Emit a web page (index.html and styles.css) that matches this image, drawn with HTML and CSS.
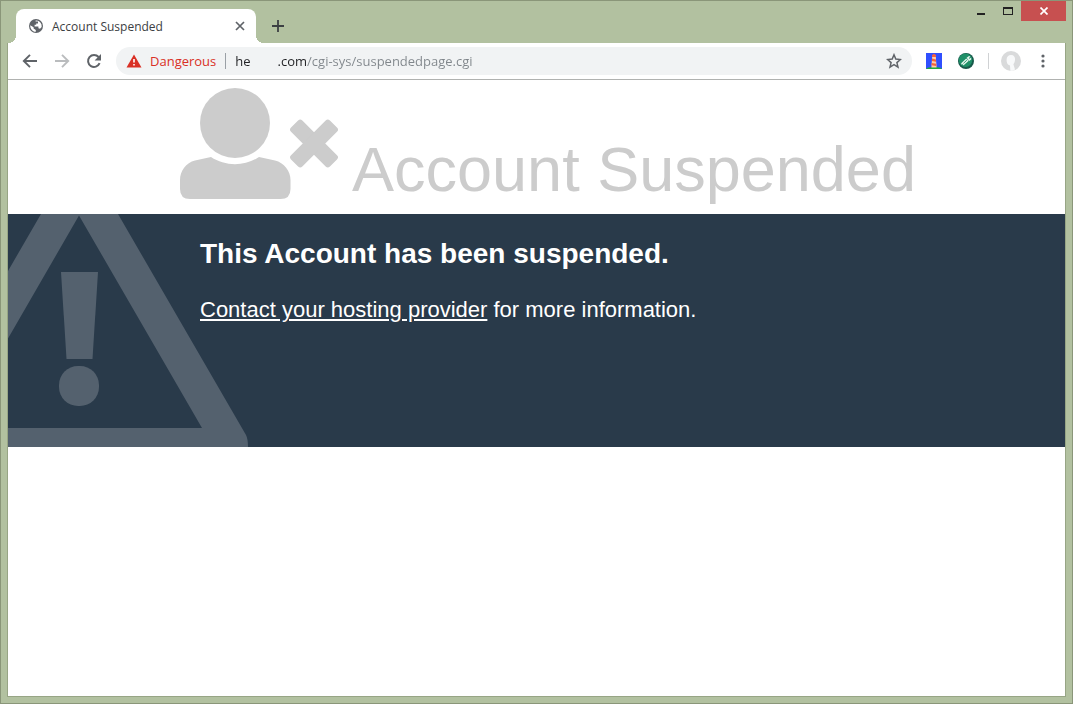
FILE: index.html
```html
<!DOCTYPE html>
<html lang="en">
<head>
  <meta charset="UTF-8">
  <title>Account Suspended</title>
  <link rel="stylesheet" href="styles.css">
</head>
<body>
  <div class="window">
    <div class="titlebar">
      <div class="tab">
        <svg class="favicon" viewBox="0 0 14 14" width="14" height="14">
          <circle cx="7" cy="7" r="7" fill="#5f6368"/>
          <path d="M1.2 6.2 L4.6 8.2 V9.6 L6.8 11 V12.8 C3.2 12.6 1.2 9.8 1.2 6.2Z M6.6 1.4 C9.2 1.2 11.4 2.6 12.5 5.4 L12.7 8 L11 9.8 L9.4 9.2 V7.4 H5.6 V5.8 H7.2 V4.4 H9 V2.6 H6.6Z" fill="#fff"/>
        </svg>
        <span class="tab-title">Account Suspended</span>
        <button class="tab-close" aria-label="Close tab">
          <svg viewBox="0 0 10 10" width="10" height="10"><path d="M1 1L9 9M9 1L1 9" stroke="#5f6368" stroke-width="1.7"/></svg>
        </button>
      </div>
      <button class="new-tab" aria-label="New tab">
        <svg viewBox="0 0 12 12" width="12" height="12"><path d="M6 0V12M0 6H12" stroke="#3c4043" stroke-width="1.8"/></svg>
      </button>
      <div class="window-controls">
        <button class="win-btn" aria-label="Minimize">
          <svg viewBox="0 0 10 10" width="10" height="10"><path d="M1 8H9" stroke="#222" stroke-width="2"/></svg>
        </button>
        <button class="win-btn" aria-label="Maximize">
          <svg viewBox="0 0 10 8" width="10" height="8"><path d="M0 0H10V8H0ZM1 2V7H9V2Z" fill="#222" fill-rule="evenodd"/></svg>
        </button>
        <button class="win-btn win-close" aria-label="Close">
          <svg viewBox="0 0 8 8" width="8" height="8"><path d="M.5 .5L7.5 7.5M7.500 .5L.5 7.500" stroke="#fff" stroke-width="1.7"/></svg>
        </button>
      </div>
    </div>

    <div class="frame">
      <div class="toolbar">
        <button class="nav-btn" aria-label="Back">
          <svg viewBox="0 0 16 16" width="16" height="16"><path d="M15 8H2M8 1.8L1.8 8L8 14.2" fill="none" stroke="#5f6368" stroke-width="1.9"/></svg>
        </button>
        <button class="nav-btn" aria-label="Forward">
          <svg viewBox="0 0 16 16" width="16" height="16"><path d="M1 8H14M8 1.8L14.2 8L8 14.2" fill="none" stroke="#babcbe" stroke-width="1.9"/></svg>
        </button>
        <button class="nav-btn" aria-label="Reload">
          <svg viewBox="0 0 16 16" width="16" height="16"><path d="M13.6 10.2A6 6 0 1 1 12.6 4" fill="none" stroke="#5f6368" stroke-width="2"/><path d="M15 1V7.4H8.6Z" fill="#5f6368"/></svg>
        </button>

        <div class="omnibox">
          <svg viewBox="0 0 16 14" width="16" height="14"><path d="M8 .5L15.5 13.5H.5Z" fill="#d93025"/><path d="M7.2 5H8.8V8.6H7.2ZM7.2 10H8.8V11.6H7.2Z" fill="#fff"/></svg>
          <span class="danger">Dangerous</span>
          <input class="url" type="text" aria-label="Address" value="he&nbsp;&nbsp;&nbsp;&nbsp;&nbsp;&nbsp;&nbsp;&nbsp;.com/cgi-sys/suspendedpage.cgi">
          <button class="star" aria-label="Bookmark this page">
            <svg viewBox="0 0 16 16" width="16" height="16"><path d="M8 1.8L9.8 6.1L14.4 6.5L10.9 9.6L12 14.1L8 11.7L4 14.1L5.1 9.6L1.6 6.5L6.2 6.1Z" fill="none" stroke="#5f6368" stroke-width="1.5"/></svg>
          </button>
        </div>

        <div class="extensions">
          <button aria-label="Lighthouse">
            <svg viewBox="0 0 16 16" width="16" height="16">
              <rect width="16" height="16" fill="#304ffe"/>
              <path d="M0 16Q1 14 8 14T16 16Z" fill="#1faa3c"/>
              <path d="M6.2 3H9.8L10.6 14.5H5.4Z" fill="#ffcfa8"/>
              <path d="M6 2L8 .8L10 2V4H6ZM6 5.6L10 6.4V8.8L5.900 8ZM5.700 10L10.200 10.800V13L5.500 12.200Z" fill="#f4623c"/>
            </svg>
          </button>
          <button aria-label="Developer extension">
            <svg viewBox="0 0 16 16" width="16" height="16">
              <circle cx="8" cy="8" r="8" fill="#17594a"/>
              <circle cx="7.5" cy="7.3" r="6.7" fill="#1f9068"/>
              <path d="M3.2 10.200L8.200 5.400L10.800 7.800L5.400 12.600L4.800 11.200L3.200 11.600Z" fill="#e4f5ec"/>
              <path d="M8.600 4.800L11 3L12.400 3.400L10.800 5.200L11.600 5.800L13.200 4.600V6.400L11.200 8Z" fill="#e4f5ec"/>
              <path d="M5.400 10.400L8.800 7.200" stroke="#1f9068" stroke-width=".9"/>
            </svg>
          </button>
        </div>
        <div class="profile">
          <button aria-label="Profile">
            <svg viewBox="0 0 20 20" width="20" height="20">
              <circle cx="10" cy="10" r="10" fill="#d9dadb"/>
              <path d="M10 4C13 4 14.4 6 14 9C13.8 11.4 13 12.4 12.4 13.2L14 18.5Q12 20 9.4 20L9 14.4C6.4 14 5.4 11.6 5.6 8.6C5.8 5.6 7.4 4 10 4Z" fill="#f8f9fa"/>
            </svg>
          </button>
          <button aria-label="Menu">
            <svg viewBox="0 0 4 14" width="4" height="14" fill="#5f6368"><circle cx="2" cy="2" r="1.6"/><circle cx="2" cy="7" r="1.6"/><circle cx="2" cy="12" r="1.6"/></svg>
          </button>
        </div>
      </div>

      <main class="page">
        <header class="page-header">
          <svg class="user-times" viewBox="0 0 158 111" width="158" height="111" fill="#ccc">
            <circle cx="55" cy="35" r="35"/>
            <path d="M31 69C45 78.500 65 78.500 79 69L95 72.500C104 74.500 110.500 83 110.500 92V101Q110.500 111 100.500 111H10Q0 111 0 101V92C0 83 6 74.500 15 72.500Z"/>
            <rect x="106.500" y="47.500" width="55" height="16" rx="3" transform="rotate(45 134 55.500)"/>
            <rect x="106.500" y="47.500" width="55" height="16" rx="3" transform="rotate(-45 134 55.500)"/>
          </svg>
          <h1>Account Suspended</h1>
        </header>
        <section class="notice">
          <svg class="warning" viewBox="0 0 240 233" width="240" height="233" fill="#54616e">
            <path d="M33 0H110L238 221Q240 225 240 233H0V214H194L71 1.500L0 124.500V57Z"/>
            <path d="M53 58H90L84.500 145H58.500Z"/>
            <rect x="51" y="152" width="40" height="40" rx="19"/>
          </svg>
          <div class="notice-text">
            <h2>This Account has been suspended.</h2>
            <p><a href="#">Contact your hosting provider</a> for more information.</p>
          </div>
        </section>
      </main>
    </div>
  </div>
</body>
</html>
```
FILE: styles.css
```css
* {
  box-sizing: border-box;
}

body {
  margin: 0;
  font-family: "Liberation Sans", Arial, sans-serif;
}

button {
  display: flex;
  align-items: center;
  justify-content: center;
  padding: 0;
  border: none;
  background: none;
  cursor: pointer;
}

svg {
  display: block;
  flex-shrink: 0;
}

.window {
  display: flex;
  flex-direction: column;
  min-height: 100vh;
  padding: 0 6px 6px;
  border: 1px solid #8a9679;
  background: #b2c1a0;
}

/* title bar */
.titlebar {
  display: flex;
  height: 42px;
}

.tab {
  position: relative;
  display: flex;
  align-items: center;
  width: 240px;
  height: 34px;
  margin: 8px 0 0 9px;
  padding: 0 10px 0 13px;
  border-radius: 8px 8px 0 0;
  background: #fff;
}

/* curved feet of the active tab */
.tab::before,
.tab::after {
  content: "";
  position: absolute;
  bottom: 0;
  width: 8px;
  height: 8px;
}

.tab::before {
  left: -8px;
  background: radial-gradient(circle at 0 0, transparent 8px, #fff 8px);
}

.tab::after {
  right: -8px;
  background: radial-gradient(circle at 100% 0, transparent 8px, #fff 8px);
}

.tab-title {
  flex: 1;
  margin-left: 9px;
  font-family: "Open Sans", sans-serif;
  font-size: 12px;
  color: #3c4043;
}

.tab-close {
  width: 12px;
  height: 16px;
}

.new-tab {
  width: 28px;
  height: 34px;
  margin: 8px 0 0 8px;
}

.window-controls {
  display: flex;
  margin-left: auto;
}

.win-btn {
  width: 27px;
  height: 20px;
}

.win-close {
  width: 45px;
  background: #c75050;
}

/* browser frame */
.frame {
  flex: 1;
  display: flex;
  flex-direction: column;
  border: 1px solid #97a585;
  border-top: none;
  background: #fff;
}

.toolbar {
  display: flex;
  align-items: center;
  height: 37px;
  padding: 0 16px 0 6px;
  border-bottom: 1px solid #b0b2b0;
}

.nav-btn {
  width: 32px;
  height: 28px;
}

.omnibox {
  flex: 1;
  display: flex;
  align-items: center;
  height: 28px;
  margin-left: 6px;
  padding: 0 10px;
  border-radius: 14px;
  background: #f1f3f4;
  font-family: "Open Sans", sans-serif;
  font-size: 13px;
}

.danger {
  margin-left: 8px;
  padding-right: 9px;
  border-right: 1px solid #9aa0a6;
  line-height: 16px;
  color: #d93025;
}

/* host is dark, path is grey */
.url {
  flex: 1;
  min-width: 0;
  height: 24px;
  margin-left: 9px;
  padding: 0;
  border: none;
  outline: none;
  font-family: "Open Sans", sans-serif;
  font-size: 13px;
  color: transparent;
  background: linear-gradient(to right, #202124 72px, #80868b 72px);
  -webkit-background-clip: text;
  background-clip: text;
}

.extensions {
  display: flex;
  gap: 16px;
  margin-left: 14px;
  padding-right: 14px;
  border-right: 1px solid #d0d2d4;
}

.profile {
  display: flex;
  align-items: center;
  gap: 16px;
  margin-left: 12px;
}

.profile button:last-child {
  width: 12px;
}

/* page content */
.page-header {
  display: flex;
  align-items: flex-start;
  gap: 14px;
  height: 134px;
  padding: 8px 16px 0 172px;
}

.page-header h1 {
  margin: 45px 0 0;
  font-size: 63px;
  font-weight: normal;
  line-height: 72px;
  white-space: nowrap;
  color: #ccc;
}

.notice {
  position: relative;
  min-height: 233px;
  padding: 23px 16px 24px 192px;
  background: #293a4a;
  color: #fff;
}

.warning {
  position: absolute;
  left: 0;
  bottom: 0;
}

.notice-text {
  position: relative;
}

.notice h2 {
  margin: 0;
  font-size: 28px;
  line-height: 34px;
}

.notice p {
  margin: 25px 0 0;
  font-size: 22px;
  line-height: 28px;
}

.notice a {
  color: #fff;
}
```
